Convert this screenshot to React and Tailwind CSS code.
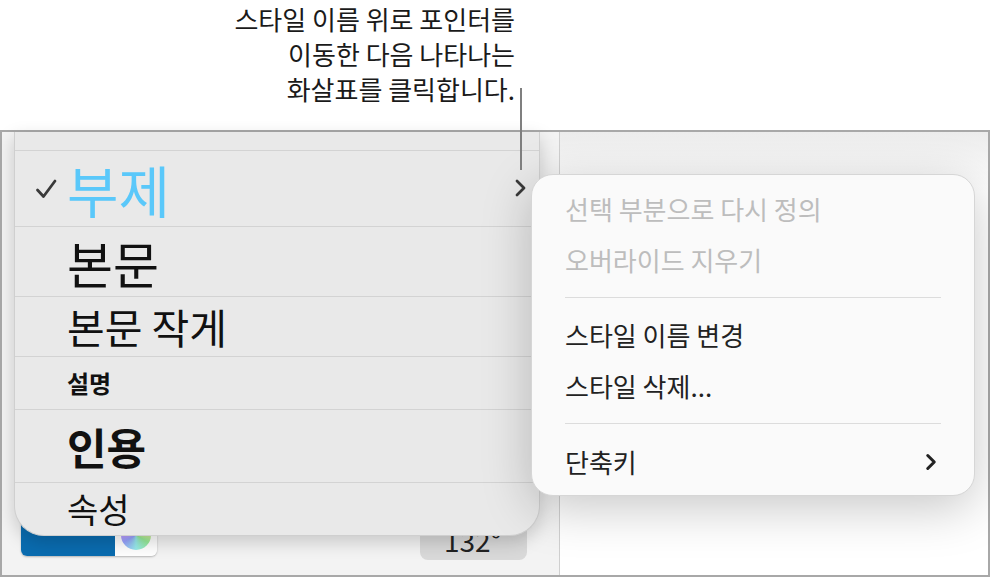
import { ChevronRight } from "lucide-react";

const styles = [
    { label: "부제", cls: "text-[56px] text-[#5ac8fa]", h: "h-[76px]", checked: true },
    { label: "본문", cls: "text-[50px] text-[#111]", h: "h-[70px]" },
    { label: "본문 작게", cls: "text-[41px] text-[#111]", h: "h-[60px]" },
    { label: "설명", cls: "text-[24px] font-bold text-[#111]", h: "h-[53px]" },
    { label: "인용", cls: "text-[43px] font-bold text-[#111]", h: "h-[73px]" },
    { label: "속성", cls: "text-[34px] text-[#111]", h: "h-[53px]" },
];

function Check() {
    return (
        <svg width="24" height="24" viewBox="0 0 24 24" fill="none">
            <path d="M3.5 13l6 6.5L21 4" stroke="#3a3a3a" strokeWidth="2.8" strokeLinecap="round" strokeLinejoin="round" />
        </svg>
    );
}

function StyleList() {
    return (
        <div className="absolute left-[12px] top-0 w-[526px] bg-[#e9e9e9] border border-t-0 border-[#cfcfcf] rounded-b-[30px] shadow-[0_6px_18px_rgba(0,0,0,0.18)] flex flex-col overflow-hidden">
            <div className="h-[18px]" />
            {styles.map((s) => (
                <div key={s.label} className={`${s.h} border-t border-[#d3d3d3] flex items-center pl-[19px] pr-[11px]`}>
                    <div className="w-[33px] flex items-center">{s.checked && <Check />}</div>
                    <span className={`${s.cls} leading-none`}>{s.label}</span>
                    {s.checked && (
                        <svg className="ml-auto -mt-[2px]" width="15" height="20" viewBox="0 0 15 20" fill="none">
                            <path d="M4 3l7 7-7 7" stroke="#3a3a3a" strokeWidth="2.8" strokeLinecap="round" strokeLinejoin="round" />
                        </svg>
                    )}
                </div>
            ))}
        </div>
    );
}

function ContextMenu() {
    return (
        <div className="absolute left-[529px] top-[42px] w-[444px] h-[322px] bg-[#fafafa] border border-[#d6d6d6] rounded-[22px] shadow-[0_12px_50px_rgba(0,0,0,0.22)] px-[33px] pt-[8px] text-[26px] leading-[51px]">
            <div className="text-[#bdbdbd]">선택 부분으로 다시 정의</div>
            <div className="text-[#bdbdbd]">오버라이드 지우기</div>
            <div className="h-[24px] flex items-center">
                <div className="h-px w-full bg-[#dcdcdc]" />
            </div>
            <div className="text-[#222]">스타일 이름 변경</div>
            <div className="text-[#222]">스타일 삭제...</div>
            <div className="h-[25px] flex items-center">
                <div className="h-px w-full bg-[#dcdcdc]" />
            </div>
            <div className="flex items-center justify-between text-[#222]">
                <span>단축키</span>
                <ChevronRight size={26} strokeWidth={2.8} className="text-[#222] -mr-[3px]" />
            </div>
        </div>
    );
}

export default function App() {
    return (
        <div className="relative w-[990px] h-[577px] bg-white overflow-hidden font-['Noto_Sans_CJK_KR','Noto_Sans',sans-serif]">
            {/* callout */}
            <div className="h-[130px]">
                <div className="w-[515px] pt-[1px] text-right text-[26px] leading-[35px] text-[#1a1a1a]">
                    <div>스타일 이름 위로 포인터를</div>
                    <div>이동한 다음 나타나는</div>
                    <div>화살표를 클릭합니다.</div>
                </div>
            </div>
            <div className="absolute left-[520px] top-[88px] w-[2px] h-[82px] bg-[#7f7f7f] z-10" />

            {/* window */}
            <div className="relative h-[447px] border-2 border-[#a8a8a8] flex">
                <div className="w-[558px] bg-[#f3f3f3] border-r border-[#cfcfcf] flex items-end justify-between pl-[19px] pr-[32px] pb-[15px]">
                    <div className="flex h-[50px] mb-[4px] rounded-b-[6px] shadow-[0_1px_2px_rgba(0,0,0,0.25)] overflow-hidden">
                        <div className="w-[94px] bg-[#0a6cb0]" />
                        <div className="w-[42px] bg-white flex items-end justify-center pb-[6px]">
                            <div className="w-[30px] h-[30px] rounded-full bg-[conic-gradient(#ff6b6b,#ffe06b,#6be36b,#6be3e3,#6b7bff,#d66bff,#ff6b6b)] opacity-70" />
                        </div>
                    </div>
                    <div className="w-[107px] h-[54px] rounded-[8px] bg-[#d9d9d9] flex items-end justify-end pr-[26px] pb-[6px] text-[28px] leading-none text-[#222]">
                        132°
                    </div>
                </div>
                <div className="flex-1 bg-gradient-to-b from-[#ececec] to-white to-[60px]" />

                <StyleList />
                <ContextMenu />
            </div>
        </div>
    );
}
